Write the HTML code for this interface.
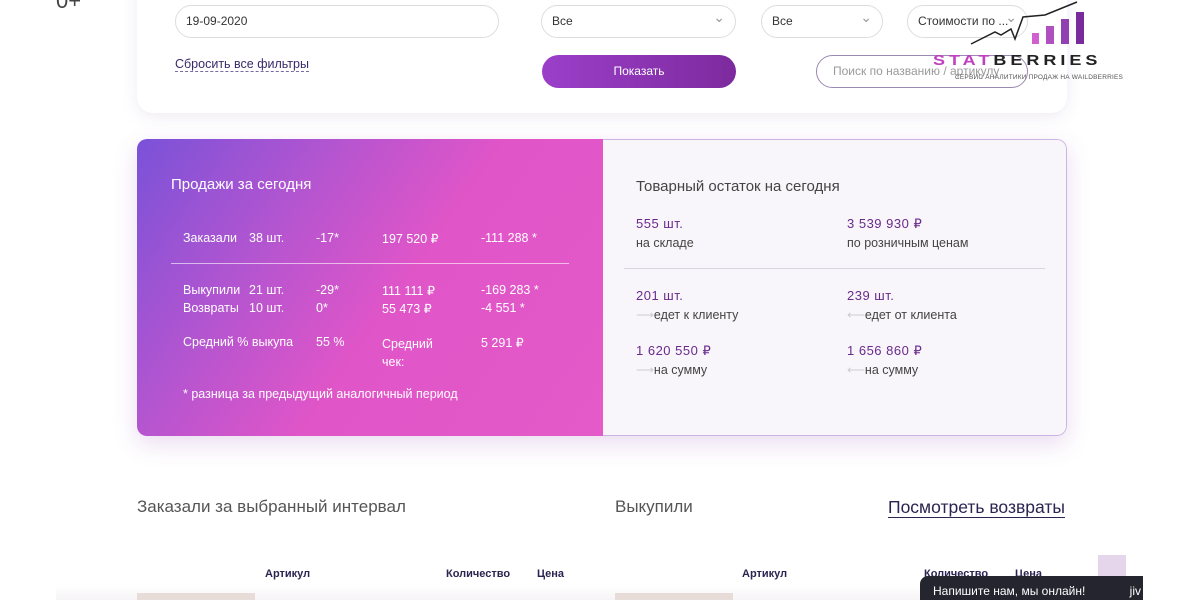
<!DOCTYPE html>
<html><head><meta charset="utf-8"><style>
*{margin:0;padding:0;box-sizing:border-box}
body{width:1200px;height:600px;overflow:hidden;background:#fff;font-family:"Liberation Sans","Noto Sans CJK SC",sans-serif;position:relative;color:#333}
.a{position:absolute}
.top{left:137px;top:-20px;width:930px;height:133px;background:#fff;border-radius:0 0 16px 16px;box-shadow:0 4px 16px rgba(120,90,160,.12)}
.inp{border:1px solid #ddd;border-radius:17px;background:#fff;font-size:12px;color:#333;padding-left:10px;line-height:31px;height:33px}
.sel:after{content:"⌄";position:absolute;right:10px;top:-4px;color:#999;font-size:14px}
.btn{background:linear-gradient(90deg,#9b3fc9,#7d2a9e);color:#fff;border-radius:17px;font-size:12px;text-align:center;line-height:33px;height:33px}
.stats{left:137px;top:139px;width:930px;height:297px;border-radius:10px;overflow:hidden;box-shadow:0 8px 24px rgba(150,80,180,.2)}
.L{left:0;top:0;width:466px;height:297px;background:linear-gradient(125deg,#7a52d8 0%,#b455d0 30%,#e055c8 55%,#e45ac8 100%);color:#fff}
.R{left:466px;top:0;width:464px;height:297px;background:#f8f6fb;border:1px solid #cdb3e0;border-left:none;border-radius:0 10px 10px 0}
.L .a{font-size:12.5px}
.R .v{font-size:13px;color:#6a2a8c;letter-spacing:.5px}
.R .t{font-size:12.5px;color:#444}
.h{font-size:17px;color:#555}
</style></head><body>
<div class="a" style="left:56px;top:-12px;font-size:22px;color:#444">0+</div>
<div class="a top"></div>
<div class="a inp" style="left:175px;top:5px;width:324px">19-09-2020</div>
<div class="a" style="left:175px;top:57px;font-size:12.5px;color:#3a2a6a;border-bottom:1px dashed #7a6aa0;line-height:14px">Сбросить все фильтры</div>
<div class="a inp sel" style="left:541px;top:5px;width:195px">Все</div>
<div class="a inp sel" style="left:761px;top:5px;width:122px">Все</div>
<div class="a inp sel" style="left:907px;top:5px;width:121px">Стоимости по ...</div>
<div class="a btn" style="left:542px;top:55px;width:194px">Показать</div>
<div class="a inp" style="left:816px;top:55px;width:212px;border-color:#9a8ab0;padding-left:16px;color:#999">Поиск по названию / артикулу</div>
<svg class="a" style="left:965px;top:0" width="120" height="48"><polyline points="6,44 30,32 36,35 46,29 50,39 58,17 80,15 112,2" fill="none" stroke="#222" stroke-width="1.5"/><rect x="67" y="33" width="7" height="11" fill="#d060d0"/><rect x="81" y="26" width="8" height="18" fill="#b050c0"/><rect x="96" y="19" width="8" height="25" fill="#9040b0"/><rect x="111" y="12" width="8" height="32" fill="#7a2a9a"/></svg>
<div class="a" style="left:933px;top:53px;font-size:18px;font-weight:bold;letter-spacing:4px;line-height:18px;transform:scaleY(.8);transform-origin:left top"><span style="color:#c040c0">STAT</span><span style="color:#222">BERRIES</span></div>
<div class="a" style="left:955px;top:74px;font-size:6.5px;color:#555;letter-spacing:.2px">СЕРВИС АНАЛИТИКИ ПРОДАЖ НА WAILDBERRIES</div>
<div class="a stats">
<div class="a L">
<div class="a" style="left:34px;top:37px;font-size:15px!important">Продажи за сегодня</div>
<div class="a" style="left:46px;top:92px">Заказали</div><div class="a" style="left:112px;top:92px">38 шт.</div><div class="a" style="left:179px;top:92px">-17*</div><div class="a" style="left:245px;top:92px">197 520 ₽</div><div class="a" style="left:344px;top:92px">-111 288 *</div>
<div class="a" style="left:34px;top:124px;width:398px;height:1px;background:rgba(255,255,255,.6)"></div>
<div class="a" style="left:46px;top:144px">Выкупили</div><div class="a" style="left:112px;top:144px">21 шт.</div><div class="a" style="left:179px;top:144px">-29*</div><div class="a" style="left:245px;top:144px">111 111 ₽</div><div class="a" style="left:344px;top:144px">-169 283 *</div>
<div class="a" style="left:46px;top:162px">Возвраты</div><div class="a" style="left:112px;top:162px">10 шт.</div><div class="a" style="left:179px;top:162px">0*</div><div class="a" style="left:245px;top:162px">55 473 ₽</div><div class="a" style="left:344px;top:162px">-4 551 *</div>
<div class="a" style="left:46px;top:196px">Средний % выкупа</div><div class="a" style="left:179px;top:196px">55 %</div><div class="a" style="left:245px;top:196px;line-height:18px">Средний<br>чек:</div><div class="a" style="left:344px;top:196px">5 291 ₽</div>
<div class="a" style="left:46px;top:248px">* разница за предыдущий аналогичный период</div>
</div>
<div class="a R">
<div class="a" style="left:33px;top:38px;font-size:15px;color:#444">Товарный остаток на сегодня</div>
<div class="a v" style="left:33px;top:76px">555 шт.</div><div class="a t" style="left:33px;top:96px">на складе</div>
<div class="a v" style="left:244px;top:76px">3 539 930 ₽</div><div class="a t" style="left:244px;top:96px">по розничным ценам</div>
<div class="a" style="left:21px;top:128px;width:421px;height:1px;background:#d8d4e0"></div>
<div class="a v" style="left:33px;top:148px">201 шт.</div><div class="a t" style="left:33px;top:167px"><span style="color:#ccc">⟶</span>едет к клиенту</div>
<div class="a v" style="left:244px;top:148px">239 шт.</div><div class="a t" style="left:244px;top:167px"><span style="color:#ccc">⟵</span>едет от клиента</div>
<div class="a v" style="left:33px;top:203px">1 620 550 ₽</div><div class="a t" style="left:33px;top:222px"><span style="color:#ccc">⟶</span>на сумму</div>
<div class="a v" style="left:244px;top:203px">1 656 860 ₽</div><div class="a t" style="left:244px;top:222px"><span style="color:#ccc">⟵</span>на сумму</div>
</div>
</div>
<div class="a h" style="left:137px;top:497px">Заказали за выбранный интервал</div>
<div class="a h" style="left:615px;top:497px">Выкупили</div>
<div class="a h" style="left:888px;top:497px;color:#2a2450;border-bottom:1px solid #2a2450;line-height:20px;font-size:17.5px">Посмотреть возвраты</div>
<div class="a" style="left:56px;top:586px;width:1087px;height:14px;background:linear-gradient(#fff,#f6f4f6)"></div>
<div class="a" style="left:265px;top:568px;font-size:11px;font-weight:bold;color:#2a2450">Артикул</div>
<div class="a" style="left:446px;top:568px;font-size:11px;font-weight:bold;color:#2a2450">Количество</div>
<div class="a" style="left:537px;top:568px;font-size:11px;font-weight:bold;color:#2a2450">Цена</div>
<div class="a" style="left:742px;top:568px;font-size:11px;font-weight:bold;color:#2a2450">Артикул</div>
<div class="a" style="left:924px;top:568px;font-size:11px;font-weight:bold;color:#2a2450">Количество</div>
<div class="a" style="left:1015px;top:568px;font-size:11px;font-weight:bold;color:#2a2450">Цена</div>
<div class="a" style="left:137px;top:593px;width:118px;height:7px;background:#e8dcd8"></div>
<div class="a" style="left:615px;top:593px;width:118px;height:7px;background:#e8dcd8"></div>
<div class="a" style="left:1098px;top:555px;width:28px;height:28px;background:#e6d6ec"></div>
<div class="a" style="left:920px;top:576px;width:223px;height:24px;background:#25252f;border-radius:8px 0 0 0;color:#fff;font-size:12px;padding:8px 0 0 13px">Напишите нам, мы онлайн!<span style="position:absolute;right:2px">jiv</span></div>
</body></html>
